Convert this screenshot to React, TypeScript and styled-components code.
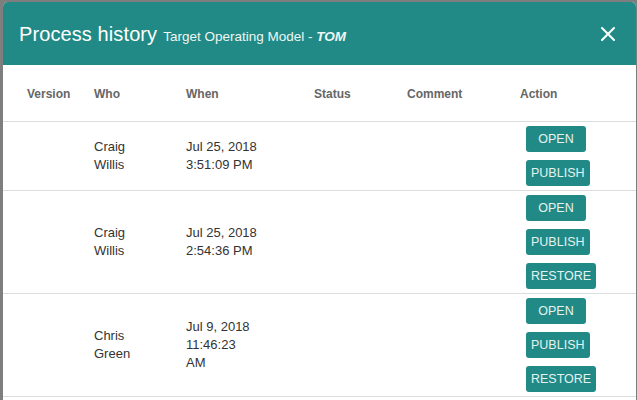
import React from "react";
import styled, { createGlobalStyle } from "styled-components";

const GlobalStyle = createGlobalStyle`
  html, body {
    margin: 0;
    padding: 0;
  }
  body {
    background: #7e7e7e;
    overflow: hidden;
    font-family: "Liberation Sans", Arial, sans-serif;
  }
`;

type Entry = {
  who: string;
  date: string;
  time: string;
  actions: string[];
};

const entries: Entry[] = [
  { who: "Craig Willis", date: "Jul 25, 2018", time: "3:51:09 PM", actions: ["Open", "Publish"] },
  { who: "Craig Willis", date: "Jul 25, 2018", time: "2:54:36 PM", actions: ["Open", "Publish", "Restore"] },
  { who: "Chris Green", date: "Jul 9, 2018", time: "11:46:23 AM", actions: ["Open", "Publish", "Restore"] },
];

const columns = ["Version", "Who", "When", "Status", "Comment", "Action"];

export default function App() {
  return (
    <>
      <GlobalStyle />
      <Page>
        <Modal>
          <Header>
            <TitleGroup>
              <Title>Process history</Title>
              <Subtitle>
                Target Operating Model - <b>TOM</b>
              </Subtitle>
            </TitleGroup>
            <CloseButton aria-label="Close">
              <svg width="14" height="14" viewBox="0 0 14 14">
                <path d="M1 1 L13 13 M13 1 L1 13" stroke="#fff" strokeWidth="2" strokeLinecap="round" />
              </svg>
            </CloseButton>
          </Header>

          <HeadRow>
            {columns.map((c) => (
              <HeadCell key={c}>{c}</HeadCell>
            ))}
          </HeadRow>

          {entries.map((e, i) => (
            <Row key={i}>
              <Cell />
              <Cell>
                <Name>{e.who}</Name>
              </Cell>
              <Cell>
                <DateLine>{e.date}</DateLine>
                <TimeLine>{e.time}</TimeLine>
              </Cell>
              <Cell />
              <Cell />
              <Actions>
                {e.actions.map((a) => (
                  <ActionButton key={a}>{a}</ActionButton>
                ))}
              </Actions>
            </Row>
          ))}
        </Modal>
      </Page>
    </>
  );
}

const Page = styled.div`
  padding: 2px 1px 0 3px;
  height: 400px;
  box-sizing: border-box;
`;

const Modal = styled.div`
  background: #fff;
  border-radius: 5px 5px 0 0;
  overflow: hidden;
  height: 100%;
`;

const Header = styled.div`
  height: 63px;
  background: #218a86;
  display: flex;
  align-items: center;
  padding: 0 21px 0 16px;
`;

const TitleGroup = styled.div`
  display: flex;
  align-items: baseline;
  gap: 6px;
  color: #fff;
  padding-top: 2px;
`;

const Title = styled.h2`
  margin: 0;
  font-size: 20px;
  font-weight: 400;
  letter-spacing: 0.1px;
`;

const Subtitle = styled.span`
  font-size: 13.5px;
  color: #eef6f5;

  b {
    font-style: italic;
    font-weight: 700;
  }
`;

const CloseButton = styled.button`
  margin-left: auto;
  background: none;
  border: none;
  padding: 0;
  width: 14px;
  height: 14px;
  display: flex;
  cursor: pointer;
`;

const grid = `
  display: grid;
  grid-template-columns: 67px 92px 128px 93px 113px 1fr;
  padding-left: 24px;
  border-bottom: 1px solid #dddddd;
`;

const HeadRow = styled.div`
  ${grid}
  height: 54px;
  align-items: center;
  padding-top: 2px;
  box-sizing: content-box;
`;

const HeadCell = styled.div`
  font-size: 12px;
  font-weight: 700;
  color: #666;
`;

const Row = styled.div`
  ${grid}
  padding-top: 4px;
  padding-bottom: 4px;
  align-items: center;
`;

const Cell = styled.div`
  font-size: 13px;
  color: #333;
  line-height: 18px;
`;

const Name = styled.div`
  max-width: 56px;
`;

const DateLine = styled.div`
  white-space: nowrap;
`;

const TimeLine = styled.div`
  max-width: 70px;
`;

const Actions = styled.div`
  display: flex;
  flex-direction: column;
  align-items: flex-start;
  gap: 8px;
  padding-left: 6px;
`;

const ActionButton = styled.button`
  height: 26px;
  min-width: 60px;
  padding: 0 5px;
  border: none;
  border-radius: 3px;
  background: #218a86;
  color: #e4f2f1;
  font-family: "Liberation Sans", Arial, sans-serif;
  font-size: 12.5px;
  text-transform: uppercase;
  cursor: pointer;
`;
